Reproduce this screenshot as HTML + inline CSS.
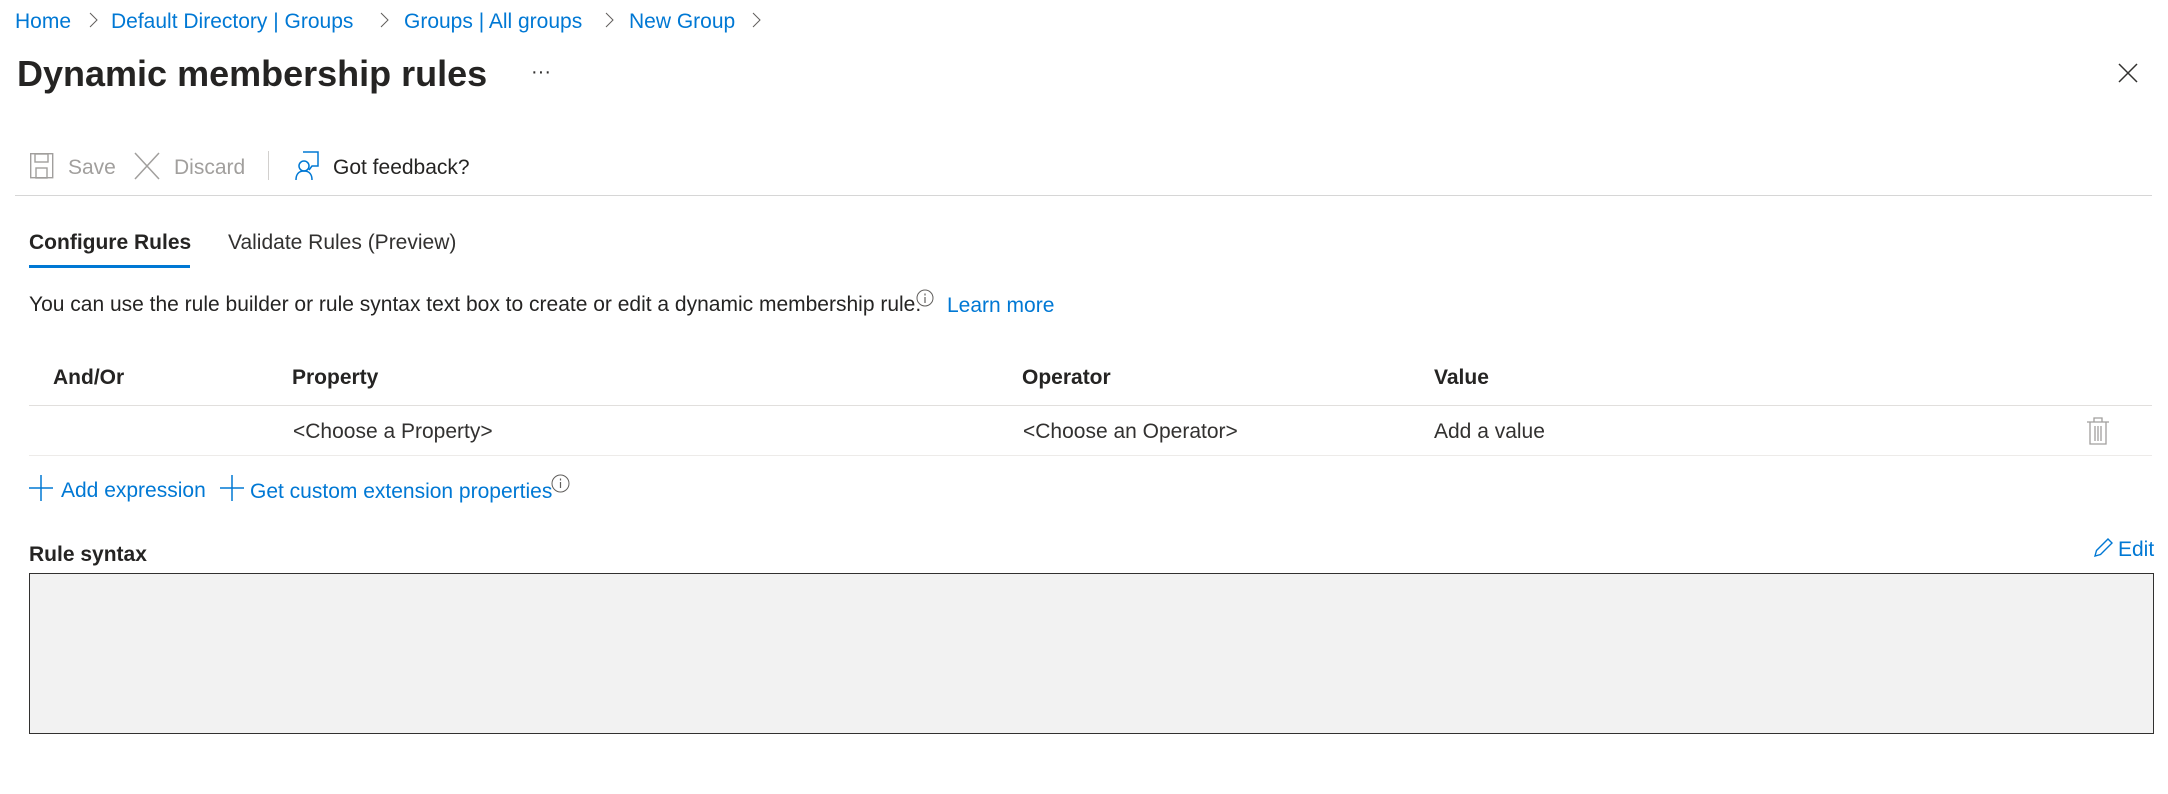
<!DOCTYPE html>
<html><head><meta charset="utf-8"><style>
body{margin:0;width:2168px;height:794px;background:#fff;font-family:"Liberation Sans",sans-serif;position:relative;overflow:hidden;color:#323130}
.t{position:absolute;white-space:nowrap;font-size:21px;line-height:24px;margin-top:2px}
.b{color:#0078d4}
.bold{font-weight:bold}
.line{position:absolute;height:1px;background:#e1dfdd}
svg{position:absolute}
</style></head><body>
<div class="t b" style="left:15px;top:8px">Home</div>
<div class="t b" style="left:111px;top:8px">Default Directory | Groups</div>
<div class="t b" style="left:404px;top:8px">Groups | All groups</div>
<div class="t b" style="left:629px;top:8px">New Group</div>
<svg style="left:89px;top:12px" width="10" height="16"><path d="M1 1l7 7-7 7" stroke="#605e5c" fill="none"/></svg>
<svg style="left:380px;top:12px" width="10" height="16"><path d="M1 1l7 7-7 7" stroke="#605e5c" fill="none"/></svg>
<svg style="left:605px;top:12px" width="10" height="16"><path d="M1 1l7 7-7 7" stroke="#605e5c" fill="none"/></svg>
<svg style="left:752px;top:12px" width="10" height="16"><path d="M1 1l7 7-7 7" stroke="#605e5c" fill="none"/></svg>
<div class="t bold" style="left:17px;top:51px;font-size:36px;line-height:42px;color:#252423">Dynamic membership rules</div>
<div class="t" style="left:531px;top:58px;font-size:20px">···</div>
<svg style="left:2118px;top:63px" width="20" height="20"><path d="M1 1l18 18M19 1L1 19" stroke="#323130" stroke-width="1.5"/></svg>
<svg style="left:30px;top:153px" width="24" height="26"><rect x=".7" y=".7" width="22" height="24" fill="none" stroke="#a19f9d" stroke-width="1.4"/><rect x="5" y="1" width="13" height="8" fill="none" stroke="#a19f9d" stroke-width="1.4"/><rect x="6" y="15" width="11" height="10" fill="none" stroke="#a19f9d" stroke-width="1.4"/></svg>
<div class="t" style="left:68px;top:154px;color:#a19f9d">Save</div>
<svg style="left:134px;top:152px" width="26" height="28"><path d="M1 1l24 26M25 1L1 27" stroke="#a19f9d" stroke-width="1.5"/></svg>
<div class="t" style="left:174px;top:154px;color:#a19f9d">Discard</div>
<div style="position:absolute;left:268px;top:151px;width:1px;height:29px;background:#d2d0ce"></div>
<svg style="left:295px;top:151px" width="24" height="30"><path d="M8 1h15v14h-6l-3 4" stroke="#0078d4" fill="none" stroke-width="1.5"/><circle cx="9" cy="15" r="5" stroke="#0078d4" fill="none" stroke-width="1.5"/><path d="M1 29c0-6 3-9 8-9s8 3 8 9" stroke="#0078d4" fill="none" stroke-width="1.5"/></svg>
<div class="t" style="left:333px;top:154px;color:#252423">Got feedback?</div>
<div class="line" style="left:15px;top:195px;width:2137px;background:#d6d6d6"></div>
<div class="t" style="left:29px;top:229px;font-weight:bold;color:#252423">Configure Rules</div>
<div style="position:absolute;left:29px;top:265px;width:161px;height:3px;background:#0078d4"></div>
<div class="t" style="left:228px;top:229px">Validate Rules (Preview)</div>
<div class="t" style="left:29px;top:291px;color:#252423">You can use the rule builder or rule syntax text box to create or edit a dynamic membership rule.</div>
<svg style="left:916px;top:289px" width="18" height="18"><circle cx="9" cy="9" r="8" stroke="#605e5c" fill="none"/><path d="M9 8v6M9 4.5v2" stroke="#605e5c" stroke-width="1.2"/></svg>
<div class="t b" style="left:947px;top:292px">Learn more</div>
<div class="t bold" style="left:53px;top:364px;color:#252423">And/Or</div>
<div class="t bold" style="left:292px;top:364px;color:#252423">Property</div>
<div class="t bold" style="left:1022px;top:364px;color:#252423">Operator</div>
<div class="t bold" style="left:1434px;top:364px;color:#252423">Value</div>
<div class="line" style="left:29px;top:405px;width:2123px"></div>
<div class="t" style="left:293px;top:418px">&lt;Choose a Property&gt;</div>
<div class="t" style="left:1023px;top:418px">&lt;Choose an Operator&gt;</div>
<div class="t" style="left:1434px;top:418px">Add a value</div>
<svg style="left:2086px;top:417px" width="24" height="28"><path d="M1 5h22M8 5V1h8v4M4 5v22h16V5M9 9v15M12 9v15M15 9v15" stroke="#a19f9d" fill="none" stroke-width="1.3"/></svg>
<div class="line" style="left:29px;top:455px;width:2123px;background:#edebe9"></div>
<svg style="left:29px;top:475px" width="24" height="26"><path d="M12 0v26M0 13h24" stroke="#0078d4" stroke-width="1.5"/></svg>
<div class="t b" style="left:61px;top:477px">Add expression</div>
<svg style="left:220px;top:475px" width="24" height="26"><path d="M12 0v26M0 13h24" stroke="#0078d4" stroke-width="1.5"/></svg>
<div class="t b" style="left:250px;top:478px">Get custom extension properties</div>
<svg style="left:551px;top:474px" width="19" height="19"><circle cx="9.5" cy="9.5" r="8.5" stroke="#605e5c" fill="none"/><path d="M9.5 8v6M9.5 4.5v2" stroke="#605e5c" stroke-width="1.2"/></svg>
<div class="t bold" style="left:29px;top:541px;color:#252423">Rule syntax</div>
<svg style="left:2094px;top:537px" width="20" height="20"><path d="M1 19l1.5-5.5L14 2l4 4L6.5 17.5z" stroke="#0078d4" fill="none" stroke-width="1.4"/></svg>
<div class="t b" style="left:2118px;top:536px">Edit</div>
<div style="position:absolute;left:29px;top:573px;width:2123px;height:159px;background:#f2f2f2;border:1px solid #323130"></div>
</body></html>
